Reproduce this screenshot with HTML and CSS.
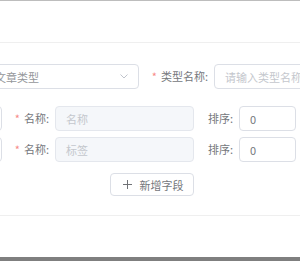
FILE: index.html
```html
<!DOCTYPE html>
<html lang="zh-CN">
<head>
    <meta charset="UTF-8">
    <meta name="viewport" content="width=device-width, initial-scale=1.0">
    <title>新增类型</title>
    <link rel="stylesheet" href="styles.css">
</head>
<body>
    <div class="dialog">
        <div class="dialog-header"></div>

        <div class="dialog-body">
            <div class="form">
                <!-- 第一行: 文章类型 + 类型名称 -->
                <div class="form-row">
                    <div class="form-label wide"></div>
                    <div class="select">
                        <span class="select-text">文章类型</span>
                        <svg class="select-arrow" width="8" height="5" viewBox="0 0 8 5">
                            <polyline points="0.5,0.5 4,4 7.5,0.5" fill="none" stroke="#c0c4cc" stroke-width="1"/>
                        </svg>
                    </div>
                    <div class="form-label label-type"><span class="req">*</span>类型名称:</div>
                    <div class="input input-type"><span class="placeholder">请输入类型名称</span></div>
                </div>

                <!-- 字段列表 -->
                <div class="field-list">
                    <div class="form-row">
                        <div class="input input-key"></div>
                        <div class="form-label label-name"><span class="req">*</span>名称:</div>
                        <div class="input input-name disabled"><span class="placeholder">名称</span></div>
                        <div class="form-label label-sort">排序:</div>
                        <div class="input input-sort"><span class="value">0</span></div>
                    </div>
                    <div class="form-row">
                        <div class="input input-key"></div>
                        <div class="form-label label-name"><span class="req">*</span>名称:</div>
                        <div class="input input-name disabled"><span class="placeholder">标签</span></div>
                        <div class="form-label label-sort">排序:</div>
                        <div class="input input-sort"><span class="value">0</span></div>
                    </div>
                </div>

                <div class="add-row">
                    <button class="btn-add">
                        <svg width="9" height="9" viewBox="0 0 9 9">
                            <path d="M4.5 0 V9 M0 4.5 H9" stroke="#707276" stroke-width="1"/>
                        </svg>
                        新增字段
                    </button>
                </div>
            </div>
        </div>

        <div class="dialog-footer"></div>
    </div>
</body>
</html>
```

FILE: styles.css
```css
body {
    margin: 0;
    padding: 0;
    background-color: #7f7f7f;
    font-family: "Noto Sans CJK SC", "Noto Sans", sans-serif;
    font-size: 11px;
    color: #75777c;
    overflow: hidden;
    height: 261px;
}
.dialog {
    width: 300px;
    background-color: #fff;
    border-top: 1px solid #bdbdbd;
    overflow: hidden;
}
.dialog-header {
    height: 41px;
    border-bottom: 1px solid #efefef;
}
.dialog-body {
    padding: 21px 0 19px 0;
}
.form {
    margin-left: -100px;
    width: 600px;
}
.form-row {
    display: flex;
    align-items: center;
    height: 25px;
}
.field-list {
    display: flex;
    flex-direction: column;
    gap: 6px;
    margin-top: 17px;
}
.form-label {
    box-sizing: border-box;
    text-align: right;
    padding-right: 6px;
    white-space: nowrap;
    line-height: 25px;
}
.req {
    color: #f78989;
    margin-right: 4px;
}
.wide { width: 84px; }
.label-type { width: 75px; }
.label-name { width: 53px; }
.label-sort { width: 45px; padding-right: 6px; }

.select,
.input {
    box-sizing: border-box;
    height: 25px;
    border: 1px solid #dcdfe6;
    border-radius: 4px;
    background-color: #fff;
    display: flex;
    align-items: center;
    padding: 0 10px;
    white-space: nowrap;
    overflow: hidden;
}
.select {
    width: 155px;
    justify-content: space-between;
}
.select-text {
    color: #94969a;
}
.select-arrow {
    display: block;
}
.input-type { width: 200px; }
.input-key { width: 102px; }
.input-name { width: 139px; }
.input-sort { width: 57px; }
.input.disabled {
    background-color: #f5f7fa;
    border-color: #e4e7ed;
}
.placeholder {
    color: #c4c7cd;
}
.value {
    color: #75777c;
}
.add-row {
    margin-top: 11px;
    padding-left: 210px;
}
.btn-add {
    box-sizing: border-box;
    width: 84px;
    height: 23px;
    border: 1px solid #dcdfe6;
    border-radius: 4px;
    background-color: #fff;
    color: #75777c;
    font-family: inherit;
    font-size: 11px;
    display: flex;
    align-items: center;
    justify-content: center;
    gap: 8px;
    padding: 0 0 0 2px;
}
.dialog-footer {
    height: 41px;
    border-top: 1px solid #efefef;
}
```
